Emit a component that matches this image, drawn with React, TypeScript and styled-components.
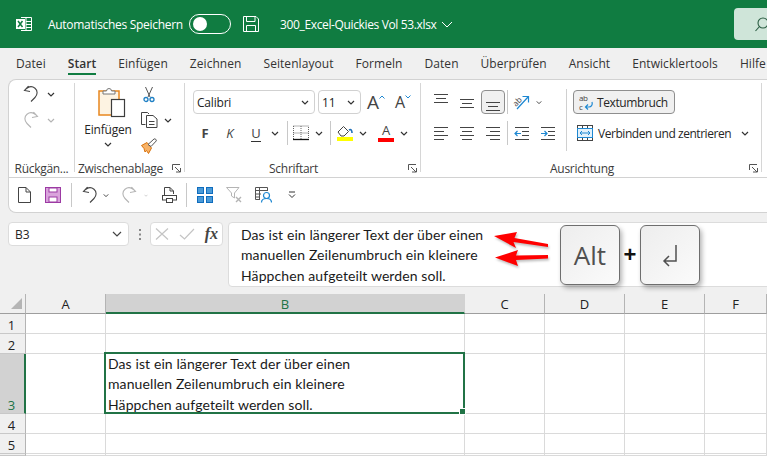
import React from 'react';
import styled, { createGlobalStyle } from 'styled-components';

const UI_FONT = '"Open Sans", "Noto Sans", sans-serif';
const CELL_FONT = 'Lato, "Open Sans", sans-serif';

const GlobalStyle = createGlobalStyle`
  html, body {
    margin: 0;
    height: 100%;
    overflow: hidden;
    background: #f0f0f0;
  }
  body {
    font-family: ${UI_FONT};
    font-size: 12px;
    color: #262626;
  }
  svg { display: block; }
`;

const Window = styled.div`
  width: 767px;
  height: 456px;
  overflow: hidden;
  display: flex;
  flex-direction: column;
`;

/* title bar */
const TitleBar = styled.header`
  flex: none;
  height: 48px;
  background: #107c41;
  color: #fff;
  display: flex;
  align-items: center;
  padding-left: 16px;
  overflow: hidden;
`;

const AutoSave = styled.span`
  margin-left: 16px;
  width: 141px;
  white-space: nowrap;
  letter-spacing: -0.3px;
`;

const Toggle = styled.div`
  box-sizing: border-box;
  width: 42px;
  height: 20px;
  border: 1px solid #fff;
  border-radius: 10px;
  padding: 2px;
  margin-right: 12px;

  &::before {
    content: '';
    display: block;
    width: 14px;
    height: 14px;
    margin-left: 1px;
    border-radius: 50%;
    background: #fff;
  }
`;

const FileName = styled.span`
  margin-left: 21px;
  width: 161px;
  white-space: nowrap;
  letter-spacing: -0.36px;
`;

const SearchBox = styled.div`
  margin-left: auto;
  margin-right: -1px;
  width: 34px;
  height: 32px;
  background: #cfe5d9;
  border-radius: 4px 0 0 4px;
  display: flex;
  align-items: center;
  padding-left: 21px;
  box-sizing: border-box;
`;

/* tabs */
const TabBar = styled.nav`
  flex: none;
  height: 31px;
  display: flex;
  gap: 22px;
  padding: 0 0 0 16px;
  overflow: hidden;
`;

const Tab = styled.div<{ $active?: boolean }>`
  position: relative;
  line-height: 31px;
  white-space: nowrap;
  color: #333;
  letter-spacing: 0.06px;
  font-weight: ${p => (p.$active ? 600 : 400)};

  ${p =>
    p.$active &&
    `&::after {
      content: '';
      position: absolute;
      left: 0;
      right: 0;
      bottom: 4px;
      height: 2px;
      background: #107c41;
    }`}
`;

/* ribbon */
const Ribbon = styled.section`
  flex: none;
  box-sizing: border-box;
  height: 134px;
  margin-left: 8px;
  background: #fff;
  border: 1px solid #d2d2d2;
  border-right: none;
  border-radius: 8px 0 0 8px;
  display: flex;
  flex-direction: column;
`;

const RibbonGroups = styled.div`
  flex: none;
  box-sizing: border-box;
  height: 98px;
  padding-top: 3px;
  display: flex;
  align-items: flex-start;
  border-bottom: 1px solid #d2d2d2;
`;

const Group = styled.div<{ $w: number }>`
  flex: none;
  width: ${p => p.$w}px;
  height: 94px;
  display: flex;
  flex-direction: column;
`;

const GroupDivider = styled.div`
  flex: none;
  width: 1px;
  height: 89px;
  background: #d6d6d6;
`;

const GroupBody = styled.div<{ $pad?: number }>`
  flex: 1;
  display: flex;
  min-height: 0;
  padding-left: ${p => p.$pad ?? 0}px;
`;

const LabelRow = styled.div`
  flex: none;
  height: 18px;
  display: flex;
  align-items: center;
`;

const GroupLabel = styled.div`
  flex: 1;
  text-align: center;
  white-space: nowrap;
  color: #3c3c3c;
  letter-spacing: -0.3px;
`;

const Launcher = styled.div`
  flex: none;
  width: 18px;
  display: flex;
  justify-content: flex-end;
  padding-right: 3px;
  box-sizing: border-box;
`;

const StackColumn = styled.div`
  flex: none;
  display: flex;
  flex-direction: column;
  gap: 4px;
`;

const ToolRow = styled.div<{ $h?: number }>`
  display: flex;
  align-items: center;
  height: ${p => p.$h ?? 22}px;
`;

const IconCell = styled.div<{ $w: number }>`
  flex: none;
  width: ${p => p.$w}px;
  height: 100%;
  display: flex;
  align-items: center;
  justify-content: center;
`;

const Spacer = styled.div<{ $w: number }>`
  flex: none;
  width: ${p => p.$w}px;
`;

const Sep = styled.div<{ $h?: number }>`
  flex: none;
  width: 1px;
  height: ${p => p.$h ?? 24}px;
  background: #c8c8c8;
`;

const PasteColumn = styled.div`
  flex: none;
  width: 48px;
  margin: 0 8px 0 9px;
  display: flex;
  flex-direction: column;
  align-items: center;
  padding-top: 4px;
`;

const PasteIcon = styled.div`
  margin-left: 7px;
`;

const PasteLabel = styled.div`
  margin-top: 4px;
  line-height: 16px;
  letter-spacing: -0.2px;
`;

const PasteChevron = styled.div`
  margin-top: 4px;
`;

const FontTools = styled.div`
  display: flex;
  flex-direction: column;
  gap: 6px;
  padding-top: 7px;
`;

const AlignTools = styled(FontTools)`
  width: 138px;
  flex: none;
`;

const Select = styled.div<{ $w: number }>`
  flex: none;
  box-sizing: border-box;
  width: ${p => p.$w}px;
  height: 24px;
  border: 1px solid #d1d1d1;
  border-radius: 4px;
  display: flex;
  align-items: center;
  justify-content: space-between;
  padding: 0 5px 0 3px;
  color: #222;
  letter-spacing: -0.2px;
`;

const FormatLetter = styled.span<{ $bold?: boolean; $italic?: boolean; $under?: boolean }>`
  font-size: 13px;
  line-height: 16px;
  color: #444;
  font-weight: ${p => (p.$bold ? 700 : 400)};
  font-style: ${p => (p.$italic ? 'italic' : 'normal')};
  border-bottom: ${p => (p.$under ? '1px solid #333' : 'none')};
`;

const GrowLetter = styled.span<{ $size: number }>`
  position: relative;
  font-size: ${p => p.$size}px;
  line-height: 20px;
  color: #444;
  padding-right: 5px;
`;

const GrowCaret = styled.span`
  position: absolute;
  right: -1px;
  top: 3px;
`;

const ColorLetter = styled.span`
  font-size: 13px;
  line-height: 13px;
  color: #444;
  margin-bottom: 1px;
`;

const ColorBar = styled.div<{ $color: string }>`
  width: 16px;
  height: 4px;
  background: ${p => p.$color};
`;

const ColorStack = styled.div`
  display: flex;
  flex-direction: column;
  align-items: center;
`;

const ActiveAlign = styled.div`
  flex: none;
  box-sizing: border-box;
  width: 24px;
  height: 24px;
  margin: 0 1px;
  border: 1px solid #8e8e8e;
  border-radius: 4px;
  background: #f0f0f0;
  display: flex;
  align-items: center;
  justify-content: center;
`;

const TallSep = styled.div`
  flex: none;
  width: 1px;
  height: 62px;
  margin-top: 6px;
  background: #d0d0d0;
`;

const WrapColumn = styled.div`
  flex: none;
  margin-left: 6px;
  display: flex;
  flex-direction: column;
  gap: 6px;
  padding-top: 7px;
`;

const WrapButton = styled.div`
  box-sizing: border-box;
  width: 102px;
  height: 24px;
  border: 1px solid #8e8e8e;
  border-radius: 4px;
  background: #f0f0f0;
  display: flex;
  align-items: center;
  gap: 3px;
  padding-left: 5px;
  white-space: nowrap;
  letter-spacing: -0.4px;
`;

const MergeRow = styled.div`
  height: 26px;
  display: flex;
  align-items: center;
  padding-left: 4px;
  white-space: nowrap;
  letter-spacing: -0.45px;
`;

const MergeText = styled.span`
  margin: 0 11px 0 5px;
  width: 132px;
`;

const Toolbar = styled.div`
  flex: 1;
  display: flex;
  align-items: center;
`;

/* formula bar */
const FormulaBar = styled.div`
  flex: none;
  height: 81px;
  box-sizing: border-box;
  padding: 9px 0 0 8px;
  display: flex;
  align-items: flex-start;
`;

const NameBox = styled.div`
  flex: none;
  box-sizing: border-box;
  width: 121px;
  height: 24px;
  background: #fff;
  border: 1px solid #dcdcdc;
  border-radius: 4px;
  display: flex;
  align-items: center;
  justify-content: space-between;
  padding: 0 6px;
`;

const Grip = styled.div`
  flex: none;
  width: 21px;
  height: 24px;
  display: flex;
  align-items: center;
  justify-content: center;
`;

const FxBox = styled(NameBox)`
  width: 73px;
  padding: 0 4px;
  margin-right: 5px;
`;

const FxLabel = styled.span`
  font-family: "Liberation Serif", serif;
  font-style: italic;
  font-weight: 700;
  font-size: 16px;
  color: #444;
`;

const FormulaInput = styled.div`
  position: relative;
  flex: 1;
  box-sizing: border-box;
  height: 65px;
  margin-right: -8px;
  background: #fff;
  border: 1px solid #dcdcdc;
  border-radius: 4px;
  padding: 2px 0 0 12px;
`;

const CellText = styled.div`
  font-family: ${CELL_FONT};
  font-size: 14px;
  letter-spacing: 0.1px;
  line-height: 20.3px;
  color: #1a1a1a;
  white-space: nowrap;
`;

const Arrows = styled.svg`
  position: absolute;
  left: 263px;
  top: 7px;
  filter: drop-shadow(1px 2px 1px rgba(0, 0, 0, 0.25));
`;

const KeyCap = styled.div<{ $left: number }>`
  position: absolute;
  left: ${p => p.$left}px;
  top: 2px;
  box-sizing: border-box;
  width: 60px;
  height: 60px;
  border: 1px solid #6e6e6e;
  border-radius: 6px;
  background: linear-gradient(135deg, #ededed, #fbfbfb);
  box-shadow: 2px 3px 5px rgba(0, 0, 0, 0.3);
  display: flex;
  align-items: center;
  justify-content: center;
  font-size: 26px;
  color: #505050;
`;

const PlusSign = styled.div`
  position: absolute;
  left: 389px;
  top: 15px;
  width: 24px;
  text-align: center;
  font-family: "Liberation Sans", sans-serif;
  font-weight: 700;
  font-size: 22px;
  line-height: 34px;
  color: #111;
  text-shadow: 0 0 3px #fff, 0 0 3px #fff;
`;

/* sheet */
const Sheet = styled.div`
  flex: 1;
  background: #fff;
  display: grid;
  grid-template-columns: 26px 80px 359px 80px 80px 80px 1fr;
  grid-template-rows: 20px 20px 20px 60px 20px 20px 1fr;
  overflow: hidden;
`;

const Corner = styled.div`
  box-sizing: border-box;
  background: #f0f0f0;
  border-right: 1px solid #b4b4b4;
  border-bottom: 1px solid #9e9e9e;
  display: flex;
  align-items: flex-end;
  justify-content: flex-end;
  padding: 0 3px 4px 0;

  &::after {
    content: '';
    width: 0;
    height: 0;
    border-style: solid;
    border-width: 0 0 11px 11px;
    border-color: transparent transparent #b5b5b5 transparent;
  }
`;

const ColHeader = styled.div<{ $selected?: boolean }>`
  box-sizing: border-box;
  background: ${p => (p.$selected ? '#d2d2d2' : '#f0f0f0')};
  border-right: 1px solid ${p => (p.$selected ? '#d2d2d2' : '#b4b4b4')};
  border-bottom: ${p => (p.$selected ? '2px solid #217346' : '1px solid #9e9e9e')};
  color: ${p => (p.$selected ? '#217346' : '#222')};
  font-size: 13px;
  line-height: 20px;
  text-align: center;
`;

const RowHeader = styled.div<{ $selected?: boolean }>`
  box-sizing: border-box;
  background: ${p => (p.$selected ? '#d2d2d2' : '#f0f0f0')};
  border-right: ${p => (p.$selected ? '2px solid #217346' : '1px solid #b4b4b4')};
  border-bottom: 1px solid #c8c8c8;
  color: ${p => (p.$selected ? '#217346' : '#222')};
  font-size: 13px;
  line-height: 16px;
  text-align: center;
  display: flex;
  align-items: flex-end;
  justify-content: center;
  padding-right: ${p => (p.$selected ? 1 : 2)}px;
`;

const Cell = styled.div`
  box-sizing: border-box;
  border-right: 1px solid #dadada;
  border-bottom: 1px solid #dadada;
`;

const SelectedCell = styled(Cell)`
  position: relative;
  padding: 0 0 0 2px;
`;

const SelectionFrame = styled.div`
  position: absolute;
  inset: -2px -1px -1px -2px;
  border: 2px solid #217346;
  pointer-events: none;

  &::after {
    content: '';
    position: absolute;
    right: -3px;
    bottom: -3px;
    width: 5px;
    height: 5px;
    background: #217346;
    border: 1px solid #fff;
  }
`;

/* drawn icons */
const Chevron = ({ color = '#333' }: { color?: string }) => (
  <svg width="8" height="5" viewBox="0 0 8 5" fill="none">
    <path d="M1 1l3 3 3-3" stroke={color} strokeWidth="1.2" />
  </svg>
);

const UndoIcon = ({ color = '#444', flip = false }: { color?: string; flip?: boolean }) => (
  <svg width="16" height="18" viewBox="0 0 16 18" fill="none" style={flip ? { transform: 'scaleX(-1)' } : undefined}>
    <path
      d="M5.5 1L1.5 5.5l5.5 1M1.5 5.5C5 1.5 9 .8 12 3.2c3 2.5 2.6 6.8 0 9.3L8 16.5"
      stroke={color}
      strokeWidth="1.1"
    />
  </svg>
);

const LauncherIcon = () => (
  <svg width="9" height="9" viewBox="0 0 9 9" fill="none" stroke="#555">
    <path d="M.5 6V.5H8M3 3l5 5M4 8h4.5V4" />
  </svg>
);

const AlignLines = ({ rows }: { rows: [number, number, number][] }) => (
  <svg width="16" height="22" viewBox="0 0 16 22" stroke="#444" strokeWidth="1">
    {rows.map(([y, x1, x2]) => (
      <path key={`${y}-${x1}`} d={`M${x1} ${y}.5H${x2}`} />
    ))}
  </svg>
);

const IndentIcon = ({ out }: { out?: boolean }) => (
  <svg width="16" height="16" viewBox="0 0 16 16" fill="none">
    <path d="M1 2.5H15M8 6.5H15M8 10.5H15M1 14.5H15" stroke="#444" />
    <path d={out ? 'M7 8.5H1M3.5 6L1 8.5 3.5 11' : 'M1 8.5H7M4.5 6L7 8.5 4.5 11'} stroke="#1e88d2" strokeWidth="1.2" />
  </svg>
);

const App: React.FC = () => (
  <Window>
    <GlobalStyle />
    <TitleBar>
      <svg width="16" height="16" viewBox="0 0 16 16" fill="none">
        <path d="M5 1.5H15.5V14.5H5M10 1.5V14.5M10 5.5H15.5M10 8.5H15.5M10 11.5H15.5" stroke="#fff" />
        <rect x="0" y="3" width="9" height="10" fill="#fff" />
        <path d="M2 5l4.5 6M6.5 5L2 11" stroke="#107c41" strokeWidth="1.5" />
      </svg>
      <AutoSave>Automatisches Speichern</AutoSave>
      <Toggle />
      <svg width="16" height="16" viewBox="0 0 16 16" fill="none" stroke="#fff">
        <path d="M.5.5H13L15.5 3V15.5H.5ZM3.5.5V5.5H12V.5M3.5 15.5V9.5H12.5V15.5" />
      </svg>
      <FileName>300_Excel-Quickies Vol 53.xlsx</FileName>
      <svg width="12" height="7" viewBox="0 0 12 7" fill="none" stroke="#fff">
        <path d="M1 1l5 5 5-5" />
      </svg>
      <SearchBox>
        <svg width="13" height="15" viewBox="0 0 13 15" fill="none" stroke="#2b5d43" strokeWidth="1.1">
          <circle cx="8" cy="6" r="5" />
          <path d="M4.5 9.5L.5 14" />
        </svg>
      </SearchBox>
    </TitleBar>

    <TabBar>
      <Tab>Datei</Tab>
      <Tab $active>Start</Tab>
      <Tab>Einfügen</Tab>
      <Tab>Zeichnen</Tab>
      <Tab>Seitenlayout</Tab>
      <Tab>Formeln</Tab>
      <Tab>Daten</Tab>
      <Tab>Überprüfen</Tab>
      <Tab>Ansicht</Tab>
      <Tab>Entwicklertools</Tab>
      <Tab>Hilfe</Tab>
    </TabBar>

    <Ribbon>
      <RibbonGroups>
        <Group $w={65}>
          <GroupBody $pad={11}>
            <StackColumn>
              <ToolRow>
                <IconCell $w={22}><UndoIcon /></IconCell>
                <IconCell $w={18}><Chevron /></IconCell>
              </ToolRow>
              <ToolRow>
                <IconCell $w={22}><UndoIcon color="#b4b4b4" flip /></IconCell>
                <IconCell $w={18}><Chevron color="#b4b4b4" /></IconCell>
              </ToolRow>
            </StackColumn>
          </GroupBody>
          <LabelRow><GroupLabel>Rückgän...</GroupLabel></LabelRow>
        </Group>
        <GroupDivider />

        <Group $w={109}>
          <GroupBody>
            <PasteColumn>
              <PasteIcon>
                <svg width="28" height="31" viewBox="0 0 28 31" fill="none">
                  <rect x="1" y="4" width="20" height="24" fill="#fdf3e2" stroke="#e8871e" strokeWidth="1.5" />
                  <path d="M5 7V4h3.5a2.5 2.5 0 0 1 5 0H17v3z" fill="#fff" stroke="#777" />
                  <rect x="13.5" y="12.5" width="13" height="17" fill="#fff" stroke="#3c3c3c" strokeWidth="1.2" />
                </svg>
              </PasteIcon>
              <PasteLabel>Einfügen</PasteLabel>
              <PasteChevron><Chevron /></PasteChevron>
            </PasteColumn>
            <StackColumn>
              <ToolRow>
                <IconCell $w={18}>
                  <svg width="12" height="17" viewBox="0 0 12 17" fill="none">
                    <path d="M2.5 1l4.5 10M9.5 1L5 11" stroke="#555" />
                    <circle cx="3" cy="13.5" r="2" stroke="#1e7fc4" strokeWidth="1.3" />
                    <circle cx="9" cy="13.5" r="2" stroke="#1e7fc4" strokeWidth="1.3" />
                  </svg>
                </IconCell>
              </ToolRow>
              <ToolRow>
                <IconCell $w={18}>
                  <svg width="17" height="16" viewBox="0 0 17 16" fill="none" stroke="#444">
                    <path d="M4.5 12.5H.5V.5H6.5L8 2" />
                    <path d="M5.500 3.5H12L16 7V15.5H5.5Z" fill="#fff" />
                    <path d="M8 9.5H13.5M8 12.5H13.5" />
                  </svg>
                </IconCell>
                <IconCell $w={20}><Chevron /></IconCell>
              </ToolRow>
              <ToolRow>
                <IconCell $w={18}>
                  <svg width="17" height="16" viewBox="0 0 17 16" fill="none">
                    <path d="M.5 7.500L6 4.500 10.500 10 7.500 15.500 5.500 12.500 4 14 3 10.500z" fill="#f7b267" stroke="#d9730d" />
                    <path d="M7 6.500L13 1c1-.8 3 1 2.200 2L10 8.500z" fill="#fff" stroke="#555" />
                  </svg>
                </IconCell>
              </ToolRow>
            </StackColumn>
          </GroupBody>
          <LabelRow>
            <GroupLabel>Zwischenablage</GroupLabel>
            <Launcher><LauncherIcon /></Launcher>
          </LabelRow>
        </Group>
        <GroupDivider />

        <Group $w={235}>
          <GroupBody $pad={8}>
            <FontTools>
              <ToolRow $h={24}>
                <Select $w={122}>Calibri<Chevron /></Select>
                <Spacer $w={3} />
                <Select $w={43}>11<Chevron /></Select>
                <IconCell $w={29}>
                  <GrowLetter $size={19}>
                    A
                    <GrowCaret>
                      <svg width="6" height="4" viewBox="0 0 6 4" fill="none" stroke="#1e88d2"><path d="M.5 3.5L3 1l2.5 2.5" /></svg>
                    </GrowCaret>
                  </GrowLetter>
                </IconCell>
                <IconCell $w={25}>
                  <GrowLetter $size={16}>
                    A
                    <GrowCaret>
                      <svg width="6" height="4" viewBox="0 0 6 4" fill="none" stroke="#1e88d2"><path d="M.5.5L3 3 5.5.5" /></svg>
                    </GrowCaret>
                  </GrowLetter>
                </IconCell>
              </ToolRow>
              <ToolRow $h={26}>
                <IconCell $w={24}><FormatLetter $bold>F</FormatLetter></IconCell>
                <IconCell $w={26}><FormatLetter $italic>K</FormatLetter></IconCell>
                <IconCell $w={26}><FormatLetter $under>U</FormatLetter></IconCell>
                <IconCell $w={12}><Chevron /></IconCell>
                <Spacer $w={6} />
                <Sep />
                <IconCell $w={25}>
                  <svg width="16" height="16" viewBox="0 0 16 16" fill="none">
                    <path d="M.5 1H15.5V15M.5 1V15M8 1V15M.5 8H15.5" stroke="#666" strokeDasharray="1 1" />
                    <path d="M0 14.5H16" stroke="#111" strokeWidth="1.3" />
                  </svg>
                </IconCell>
                <IconCell $w={12}><Chevron /></IconCell>
                <Spacer $w={5} />
                <Sep />
                <IconCell $w={27}>
                  <ColorStack>
                    <svg width="16" height="12" viewBox="0 0 16 12" fill="none">
                      <path d="M1 7L6.5 1.5 11.5 6.5 7 11H4z" stroke="#444" />
                      <path d="M12 5c2-1 3 0 3 3" stroke="#1e6fb8" strokeWidth="1.6" />
                    </svg>
                    <ColorBar $color="#ffff00" />
                  </ColorStack>
                </IconCell>
                <IconCell $w={10}><Chevron /></IconCell>
                <Spacer $w={5} />
                <IconCell $w={26}>
                  <ColorStack>
                    <ColorLetter>A</ColorLetter>
                    <ColorBar $color="#ff0000" />
                  </ColorStack>
                </IconCell>
                <IconCell $w={10}><Chevron /></IconCell>
              </ToolRow>
            </FontTools>
          </GroupBody>
          <LabelRow>
            <GroupLabel>Schriftart</GroupLabel>
            <Launcher><LauncherIcon /></Launcher>
          </LabelRow>
        </Group>
        <GroupDivider />

        <Group $w={340}>
          <GroupBody $pad={7}>
            <AlignTools>
              <ToolRow $h={24}>
                <IconCell $w={26}><AlignLines rows={[[3, 1, 15], [7, 3, 13], [11, 1, 15]]} /></IconCell>
                <IconCell $w={26}><AlignLines rows={[[8, 1, 15], [12, 3, 13], [16, 1, 15]]} /></IconCell>
                <ActiveAlign><AlignLines rows={[[11, 1, 15], [15, 3, 13], [19, 1, 15]]} /></ActiveAlign>
                <Spacer $w={1} />
                <Sep />
                <IconCell $w={28}>
                  <svg width="20" height="20" viewBox="0 0 20 20" fill="none">
                    <text x="1" y="12" fontSize="8" fill="#444" transform="rotate(-45 6 10)" fontFamily="Open Sans, sans-serif">ab</text>
                    <path d="M5 17L16 5M10.500 4.500H16.500V10.500" stroke="#1e88d2" strokeWidth="1.2" />
                  </svg>
                </IconCell>
                <IconCell $w={6}><Chevron /></IconCell>
              </ToolRow>
              <ToolRow $h={26}>
                <IconCell $w={26}><AlignLines rows={[[5, 1, 15], [9, 1, 11], [13, 1, 15], [17, 1, 11]]} /></IconCell>
                <IconCell $w={26}><AlignLines rows={[[5, 1, 15], [9, 3, 13], [13, 1, 15], [17, 3, 13]]} /></IconCell>
                <IconCell $w={26}><AlignLines rows={[[5, 1, 15], [9, 5, 15], [13, 1, 15], [17, 5, 15]]} /></IconCell>
                <Spacer $w={1} />
                <Sep />
                <IconCell $w={28}><IndentIcon out /></IconCell>
                <IconCell $w={24}><IndentIcon /></IconCell>
              </ToolRow>
            </AlignTools>
            <TallSep />
            <WrapColumn>
              <WrapButton>
                <svg width="15" height="20" viewBox="0 0 15 20" fill="none">
                  <text x="0" y="9" fontSize="8" fill="#444" fontFamily="Open Sans, sans-serif">ab</text>
                  <text x="0" y="18" fontSize="8" fill="#444" fontFamily="Open Sans, sans-serif">c</text>
                  <path d="M13 10c1 3-1 5-3 5H6.500M9 12.500L6.500 15 9 17.500" stroke="#1e88d2" strokeWidth="1.2" />
                </svg>
                Textumbruch
              </WrapButton>
              <MergeRow>
                <svg width="16" height="16" viewBox="0 0 16 16" fill="none">
                  <rect x=".5" y=".5" width="15" height="15" stroke="#444" />
                  <path d="M5.5 .5V3M10.5 .5V3M5.5 13V15.5M10.5 13V15.5" stroke="#444" />
                  <rect x=".5" y="3.5" width="15" height="9" fill="#e3f1fb" stroke="#1e88d2" />
                  <path d="M3 8H13M5 6L3 8l2 2M11 6l2 2-2 2" stroke="#1e88d2" />
                </svg>
                <MergeText>Verbinden und zentrieren</MergeText>
                <Chevron />
              </MergeRow>
            </WrapColumn>
          </GroupBody>
          <LabelRow>
            <GroupLabel>Ausrichtung</GroupLabel>
            <Launcher><LauncherIcon /></Launcher>
          </LabelRow>
        </Group>
        <GroupDivider />
      </RibbonGroups>

      <Toolbar>
        <IconCell $w={30}>
          <svg width="13" height="16" viewBox="0 0 13 16" fill="none" stroke="#444">
            <path d="M.5.5H8L12.5 5V15.5H.5ZM8 .5V5H12.5" />
          </svg>
        </IconCell>
        <IconCell $w={28}>
          <svg width="16" height="16" viewBox="0 0 16 16">
            <rect x=".5" y=".5" width="15" height="15" fill="#d9a3dc" stroke="#9c3aa3" />
            <rect x="4" y="1" width="8" height="4" fill="#fff" stroke="#9c3aa3" />
            <rect x="4" y="10" width="8" height="5" fill="#fff" stroke="#9c3aa3" />
          </svg>
        </IconCell>
        <Spacer $w={4} />
        <Sep $h={24} />
        <Spacer $w={5} />
        <IconCell $w={26}><UndoIcon /></IconCell>
        <IconCell $w={6}><Chevron /></IconCell>
        <Spacer $w={5} />
        <IconCell $w={30}><UndoIcon color="#b4b4b4" flip /></IconCell>
        <IconCell $w={4}><Chevron color="#b4b4b4" /></IconCell>
        <Spacer $w={4} />
        <IconCell $w={34}>
          <svg width="15" height="16" viewBox="0 0 15 16" fill="none" stroke="#444">
            <path d="M2.5 9V.5H8L11.5 4V7M8 .5V4H11.5" />
            <rect x=".5" y="8.5" width="14" height="4.5" fill="#fff" />
            <rect x="4.5" y="11.5" width="6" height="4" fill="#fff" />
          </svg>
        </IconCell>
        <Sep $h={24} />
        <IconCell $w={35}>
          <svg width="16" height="16" viewBox="0 0 16 16" fill="#4a9ad8" stroke="#0f6cbd">
            <rect x=".5" y=".5" width="6" height="6" />
            <rect x="9.5" y=".5" width="6" height="6" />
            <rect x=".5" y="9.5" width="6" height="6" />
            <rect x="9.5" y="9.5" width="6" height="6" />
          </svg>
        </IconCell>
        <IconCell $w={24}>
          <svg width="17" height="16" viewBox="0 0 17 16" fill="none" stroke="#b4b4b4">
            <path d="M.5.5H13L8.5 6V11L5.5 9V6Z" />
            <path d="M10 10l5 5M15 10l-5 5" strokeWidth="1.4" />
          </svg>
        </IconCell>
        <IconCell $w={34}>
          <svg width="17" height="16" viewBox="0 0 17 16" fill="none">
            <path d="M.5.5H12.5V4M.5.5V12.5H5M.5 3.5H12.5M4.5 .5V12.5M.5 7H6M.5 10H5" stroke="#555" />
            <circle cx="11.5" cy="8.5" r="3" stroke="#1e88d2" strokeWidth="1.2" />
            <path d="M6.5 15.5c0-3 2-4 5-4s5 1 5 4" stroke="#1e88d2" strokeWidth="1.2" />
          </svg>
        </IconCell>
        <IconCell $w={24}>
          <svg width="8" height="8" viewBox="0 0 8 8" fill="none" stroke="#333">
            <path d="M1 .5H7M1 3l3 3 3-3" transform="translate(0 .5)" />
          </svg>
        </IconCell>
      </Toolbar>
    </Ribbon>

    <FormulaBar>
      <NameBox>
        B3
        <svg width="10" height="6" viewBox="0 0 10 6" fill="none" stroke="#444" strokeWidth="1.2"><path d="M1 1l4 4 4-4" /></svg>
      </NameBox>
      <Grip>
        <svg width="2" height="11" viewBox="0 0 2 11" fill="#888">
          <rect width="2" height="2" />
          <rect y="4.5" width="2" height="2" />
          <rect y="9" width="2" height="2" />
        </svg>
      </Grip>
      <FxBox>
        <svg width="14" height="12" viewBox="0 0 14 12" fill="none" stroke="#c4c4c4" strokeWidth="1.2"><path d="M1 .5l12 11M13 .5l-12 11" /></svg>
        <svg width="16" height="12" viewBox="0 0 16 12" fill="none" stroke="#c4c4c4" strokeWidth="1.2"><path d="M1 7l4.500 4L15 1" /></svg>
        <FxLabel>fx</FxLabel>
      </FxBox>
      <FormulaInput>
        <CellText>Das ist ein längerer Text der über einen</CellText>
        <CellText>manuellen Zeilenumbruch ein kleinere</CellText>
        <CellText>Häppchen aufgeteilt werden soll.</CellText>
        <Arrows width="60" height="46" viewBox="0 0 60 46" fill="#ff0000">
          <path d="M2 6L25 2 22.5 8 56 14 56 17 21.5 12 24 18Z" />
          <path d="M3 27.5L26 20 24 25.5 56 25 56 28.5 24 30 26 36Z" />
        </Arrows>
        <KeyCap $left={331}>Alt</KeyCap>
        <PlusSign>+</PlusSign>
        <KeyCap $left={411}>
          <svg width="16" height="23" viewBox="0 0 16 23" fill="none" stroke="#505050" strokeWidth="1.5">
            <path d="M14 1V17H2M7 12L2 17l5 5" />
          </svg>
        </KeyCap>
      </FormulaInput>
    </FormulaBar>

    <Sheet>
      <Corner />
      <ColHeader>A</ColHeader>
      <ColHeader $selected>B</ColHeader>
      <ColHeader>C</ColHeader>
      <ColHeader>D</ColHeader>
      <ColHeader>E</ColHeader>
      <ColHeader>F</ColHeader>

      <RowHeader>1</RowHeader>
      {[0, 1, 2, 3, 4, 5].map(i => <Cell key={`r1-${i}`} />)}
      <RowHeader>2</RowHeader>
      {[0, 1, 2, 3, 4, 5].map(i => <Cell key={`r2-${i}`} />)}

      <RowHeader $selected>3</RowHeader>
      <Cell />
      <SelectedCell>
        <CellText>Das ist ein längerer Text der über einen</CellText>
        <CellText>manuellen Zeilenumbruch ein kleinere</CellText>
        <CellText>Häppchen aufgeteilt werden soll.</CellText>
        <SelectionFrame />
      </SelectedCell>
      {[0, 1, 2, 3].map(i => <Cell key={`r3-${i}`} />)}

      <RowHeader>4</RowHeader>
      {[0, 1, 2, 3, 4, 5].map(i => <Cell key={`r4-${i}`} />)}
      <RowHeader>5</RowHeader>
      {[0, 1, 2, 3, 4, 5].map(i => <Cell key={`r5-${i}`} />)}
      <RowHeader />
      {[0, 1, 2, 3, 4, 5].map(i => <Cell key={`r6-${i}`} />)}
    </Sheet>
  </Window>
);

export default App;
